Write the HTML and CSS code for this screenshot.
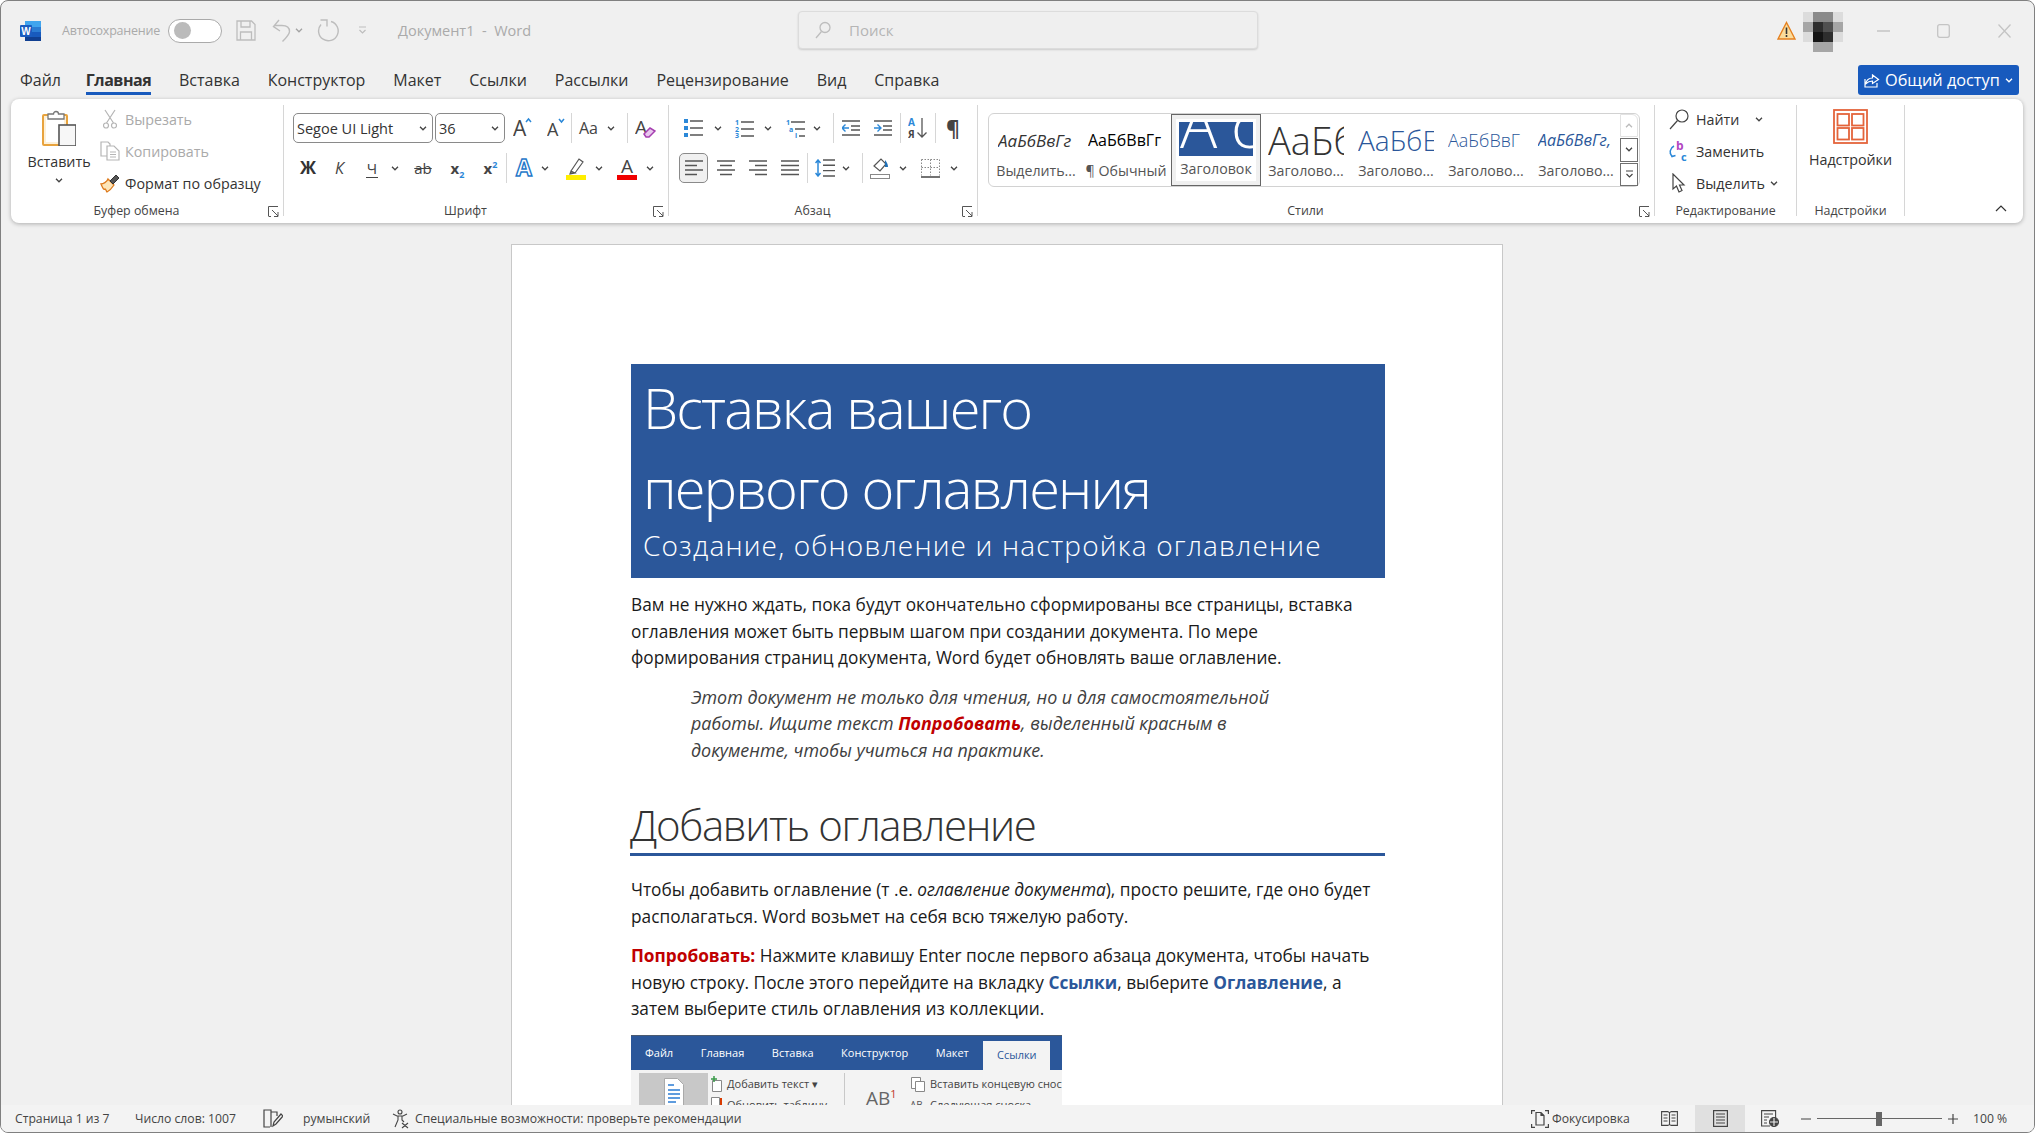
FILE: index.html

```html
<!DOCTYPE html>
<html lang="ru">
<head>
    <meta charset="UTF-8">
    <title>Документ1 - Word</title>
    <link rel="stylesheet" href="styles.css">
</head>
<body>
    <svg class="sprite" width="0" height="0">
        <symbol id="chev" viewBox="0 0 8 5"><path d="M1 .8l3 3 3-3" fill="none" stroke="#444" stroke-width="1.3"/></symbol>
        <symbol id="launch" viewBox="0 0 11 11"><path d="M.5 10V.5H10M4 4l6 6M10 6v4.500H6M.5 10.500H3" fill="none" stroke="#555"/></symbol>
    </svg>
    <div class="window">
        <header class="titlebar">
            <svg class="word-logo" width="21" height="20" viewBox="0 0 21 20">
                <rect x="5" width="16" height="6" fill="#41a5ee"/>
                <rect x="5" y="6" width="16" height="5" fill="#2b7cd3"/>
                <rect x="5" y="11" width="16" height="5" fill="#185abd"/>
                <rect x="5" y="16" width="16" height="4" fill="#103f91"/>
                <rect y="4" width="12" height="12" rx="1" fill="#1a5cc0"/>
                <text x="6" y="13.500" text-anchor="middle" font-size="10" font-weight="700" fill="#fff" font-family="Liberation Sans">W</text>
            </svg>
            <span class="autosave">Автосохранение</span>
            <span class="toggle"><span class="knob"></span></span>
            <svg class="qat-save" width="20" height="21" viewBox="0 0 20 21" fill="none" stroke="#bdbdbd" stroke-width="1.300">
                <path d="M1 1h14.500L19 4.500V20H1zM5 1v6h9V1M4.500 20v-8h11v8"/>
            </svg>
            <svg class="qat-undo" width="19" height="24" viewBox="0 0 19 24" fill="none" stroke="#bdbdbd" stroke-width="1.400">
                <path d="M7 1L1.500 7.500 8 12M2 6.500h8c5 0 7.500 2.500 7.500 6 0 3-3 6-7 10"/>
            </svg>
            <svg class="chev m4" width="8" height="5"><use href="#chev" opacity=".45"/></svg>
            <svg class="qat-redo" width="22" height="24" viewBox="0 0 22 24" fill="none" stroke="#bdbdbd" stroke-width="1.400">
                <path d="M14 2.500a9.800 9.800 0 1 1-10 3M3.500 1H10v6.500"/>
            </svg>
            <svg class="qat-more" width="9" height="9" viewBox="0 0 9 9" fill="none" stroke="#bdbdbd" stroke-width="1.200">
                <path d="M1 1h7M1.500 4l3 3 3-3"/>
            </svg>
            <span class="doc-name">Документ1&nbsp; -&nbsp; Word</span>
            <div class="search">
                <svg width="16" height="18" viewBox="0 0 16 18" fill="none" stroke="#bdbdbd" stroke-width="1.300"><circle cx="10" cy="6.500" r="5"/><path d="M6.500 10.500L1 17"/></svg>
                <span>Поиск</span>
            </div>
            <svg class="warn" width="19" height="19" viewBox="0 0 19 19">
                <path d="M9.500 1.500L18 18H1z" fill="#fbdc9c" stroke="#e5801f" stroke-width="1.400"/>
                <path d="M9.500 6.500v6.500M9.500 14v2" stroke="#333" stroke-width="1.600"/>
            </svg>
            <div class="avatar">
                <i class="p1"></i><i class="p3"></i><i class="p3"></i><i class="p1"></i>
                <i class="p2"></i><i class="p5"></i><i class="p4"></i><i class="p2"></i>
                <i class="p1"></i><i class="p6"></i><i class="p5"></i><i class="p1"></i>
                <i class="p0"></i><i class="p2"></i><i class="p2"></i><i class="p0"></i>
            </div>
            <svg class="win-min" width="13" height="2"><path d="M0 1h13" stroke="#c4c4c4" stroke-width="1.400"/></svg>
            <svg class="win-max" width="13" height="14" viewBox="0 0 13 14"><rect x=".7" y=".7" width="11.600" height="12.600" rx="2" fill="none" stroke="#c4c4c4" stroke-width="1.300"/></svg>
            <svg class="win-close" width="13" height="14" viewBox="0 0 13 14"><path d="M.5.500l12 13M12.500.500l-12 13" stroke="#c4c4c4" stroke-width="1.300"/></svg>
        </header>

        <nav class="tabs">
            <span class="tab">Файл</span>
            <span class="tab tab-active">Главная</span>
            <span class="tab">Вставка</span>
            <span class="tab">Конструктор</span>
            <span class="tab">Макет</span>
            <span class="tab">Ссылки</span>
            <span class="tab">Рассылки</span>
            <span class="tab">Рецензирование</span>
            <span class="tab">Вид</span>
            <span class="tab">Справка</span>
            <button class="share">
                <svg width="16" height="16" viewBox="0 0 16 16" fill="none" stroke="#fff" stroke-width="1.200"><path d="M1 7v8h12v-4M1.500 12c1-4 4-6 7-6V3l6 4.500-6 4V9c-3 0-5 1-7 3z"/></svg>
                <span>Общий доступ</span>
                <svg class="chev" width="8" height="5" viewBox="0 0 8 5"><path d="M1 .8l3 3 3-3" fill="none" stroke="#fff" stroke-width="1.300"/></svg>
            </button>
        </nav>

        <section class="ribbon">
            <div class="group g-clip">
                <div class="group-body clip-body">
                    <div class="paste">
                        <svg width="34" height="36" viewBox="0 0 34 36">
                            <rect x="1" y="5" width="24" height="30" rx="1" fill="#fdf0d8" stroke="#e8a33d" stroke-width="2"/>
                            <rect x="4" y="8" width="18" height="24" fill="#fff"/>
                            <path d="M6 9V4h5.500a2.500 2.500 0 0 1 5 0H22v5z" fill="#fff" stroke="#777" stroke-width="1.300"/>
                            <rect x="17" y="15" width="17" height="21" fill="#f7f7f7" stroke="#555" stroke-width="1.600"/>
                        </svg>
                        <span class="paste-label">Вставить</span>
                        <svg class="chev" width="8" height="5"><use href="#chev"/></svg>
                    </div>
                    <div class="stack">
                        <div class="stack-row dim">
                            <span class="stack-icon"><svg width="14" height="20" viewBox="0 0 14 20" fill="none" stroke="#b5b5b5" stroke-width="1.200"><path d="M2 1l8.500 13M12 1L3.500 14"/><circle cx="3" cy="16.500" r="2.500"/><circle cx="11" cy="16.500" r="2.500"/></svg></span>
                            <span>Вырезать</span>
                        </div>
                        <div class="stack-row dim">
                            <span class="stack-icon"><svg width="20" height="20" viewBox="0 0 20 20" fill="none" stroke="#b5b5b5" stroke-width="1.200"><path d="M7 15H1V1h7l2 2v2"/><path d="M7 5h7l5 5v9H7z" fill="#fff"/><path d="M10 11h6M10 13.500h6M10 16h6"/></svg></span>
                            <span>Копировать</span>
                        </div>
                        <div class="stack-row">
                            <span class="stack-icon"><svg width="20" height="19" viewBox="0 0 20 19"><path d="M8 5l6 6c-2 3-5 6-7 7-1-1-1-3-2-3-1 1-2 0-4-5 2 0 6-2 7-5z" fill="#fde5b8" stroke="#dd7a1c" stroke-width="1.300"/><path d="M10 7l6-6 3 3-6 6z" fill="#555" stroke="#333"/></svg></span>
                            <span>Формат по образцу</span>
                        </div>
                    </div>
                </div>
                <div class="group-label">Буфер обмена<svg class="launcher" width="11" height="11"><use href="#launch"/></svg></div>
            </div>

            <div class="group g-font">
                <div class="group-body rows">
                    <div class="row">
                        <div class="select sel-font">Segoe UI Light<svg class="chev" width="8" height="5"><use href="#chev"/></svg></div>
                        <div class="select sel-size m2">36<svg class="chev" width="8" height="5"><use href="#chev"/></svg></div>
                        <svg class="m8" width="20" height="22" viewBox="0 0 20 22"><text x="0" y="19" font-size="21" fill="#444" class="ico-text">A</text><path d="M13 5l2.500-3L18 5" fill="none" stroke="#2b88d8" stroke-width="1.500"/></svg>
                        <svg class="m14" width="18" height="22" viewBox="0 0 18 22"><text x="0" y="19" font-size="18" fill="#444" class="ico-text">A</text><path d="M12 2l2.500 3L17 2" fill="none" stroke="#2b88d8" stroke-width="1.500"/></svg>
                        <span class="sep m6"></span>
                        <span class="change-case m7">Aa</span>
                        <svg class="chev m6" width="8" height="5"><use href="#chev"/></svg>
                        <span class="sep m12"></span>
                        <svg class="m7" width="21" height="24" viewBox="0 0 21 24"><text x="0" y="18" font-size="19" fill="#444" class="ico-text">A</text><path d="M9 18l6-6 5 3-6 6h-3z" fill="#e8c8ee" stroke="#a53fb0" stroke-width="1.500"/></svg>
                    </div>
                    <div class="row">
                        <b class="fmt fmt-b m6">Ж</b>
                        <i class="fmt fmt-i m18">К</i>
                        <span class="fmt fmt-u m23">Ч</span>
                        <svg class="chev m13" width="8" height="5"><use href="#chev"/></svg>
                        <span class="fmt fmt-s m14">ab</span>
                        <span class="fmt fmt-x m17"><b>x</b><sub>2</sub></span>
                        <span class="fmt fmt-x m18"><b>x</b><sup>2</sup></span>
                        <span class="sep m8"></span>
                        <svg class="m7" width="20" height="22" viewBox="0 0 20 22"><text x="10" y="19" text-anchor="middle" font-size="23" font-weight="700" fill="#fff" stroke="#1f78c9" stroke-width="1.400" class="ico-text">A</text></svg>
                        <svg class="chev m7" width="8" height="5"><use href="#chev"/></svg>
                        <svg class="m17" width="20" height="24" viewBox="0 0 20 24"><path d="M5 15L13 3l4 3-8 11H5zM4 18l1-3 4 2z" fill="#fff" stroke="#555" stroke-width="1.200"/><rect y="19" width="20" height="5" fill="#ffee00"/></svg>
                        <svg class="chev m9" width="8" height="5"><use href="#chev"/></svg>
                        <svg class="m14" width="20" height="24" viewBox="0 0 20 24"><text x="10" y="17" text-anchor="middle" font-size="19" fill="#444" class="ico-text">A</text><rect y="19" width="20" height="5" fill="#f00000"/></svg>
                        <svg class="chev m9" width="8" height="5"><use href="#chev"/></svg>
                    </div>
                </div>
                <div class="group-label">Шрифт<svg class="launcher" width="11" height="11"><use href="#launch"/></svg></div>
            </div>

            <div class="group g-para">
                <div class="group-body rows">
                    <div class="row">
                        <svg class="m5" width="19" height="18" viewBox="0 0 19 18"><path d="M0 0h4v4H0zM0 7h4v4H0zM0 14h4v4H0z" fill="#2b88d8"/><path d="M6 2h13M6 9h13M6 16h13" stroke="#555" stroke-width="1.400"/></svg>
                        <svg class="chev m11" width="8" height="5"><use href="#chev"/></svg>
                        <svg class="m13" width="19" height="19" viewBox="0 0 19 19"><g font-size="7" font-weight="700" fill="#2b88d8" class="ico-text"><text y="6">1</text><text y="12.500">2</text><text y="19">3</text></g><path d="M6 3h13M6 10h13M6 17h13" stroke="#555" stroke-width="1.400"/></svg>
                        <svg class="chev m10" width="8" height="5"><use href="#chev"/></svg>
                        <svg class="m14" width="19" height="19" viewBox="0 0 19 19"><g font-size="7" font-weight="700" fill="#2b88d8" class="ico-text"><text y="6">1</text><text x="3" y="12.500">a</text><text x="9" y="19">i</text></g><path d="M5 3h14M9 10h10M13 17h6" stroke="#555" stroke-width="1.400"/></svg>
                        <svg class="chev m8" width="8" height="5"><use href="#chev"/></svg>
                        <span class="sep m12"></span>
                        <svg class="m8" width="18" height="16" viewBox="0 0 18 16"><path d="M0 1h18M9 6h9M9 10h9M0 15h18" stroke="#555" stroke-width="1.400"/><path d="M0 8h7M3.500 4.500L0 8l3.500 3.500" fill="none" stroke="#2b88d8" stroke-width="1.400"/></svg>
                        <svg class="m14" width="18" height="16" viewBox="0 0 18 16"><path d="M0 1h18M9 6h9M9 10h9M0 15h18" stroke="#555" stroke-width="1.400"/><path d="M0 8h7M3.500 4.500L7 8l-3.500 3.500" fill="none" stroke="#2b88d8" stroke-width="1.400"/></svg>
                        <span class="sep m8"></span>
                        <svg class="m7" width="19" height="22" viewBox="0 0 19 22"><text x="0" y="9" font-size="10" font-weight="700" fill="#2b88d8" class="ico-text">A</text><text x="0" y="21" font-size="10" font-weight="700" fill="#444" class="ico-text">Я</text><path d="M14 1v19M9.500 15.500L14 20l4.500-4.500" fill="none" stroke="#555" stroke-width="1.300"/></svg>
                        <span class="sep m8"></span>
                        <span class="pilcrow m10">¶</span>
                    </div>
                    <div class="row">
                        <span class="align-on"><svg width="18" height="16" viewBox="0 0 18 16"><path d="M0 1h18M0 5.500h12M0 10h18M0 14.500h12" stroke="#555" stroke-width="1.400"/></svg></span>
                        <svg class="m9" width="18" height="16" viewBox="0 0 18 16"><path d="M0 1h18M3 5.500h12M0 10h18M3 14.500h12" stroke="#555" stroke-width="1.400"/></svg>
                        <svg class="m14" width="18" height="16" viewBox="0 0 18 16"><path d="M0 1h18M6 5.500h12M0 10h18M6 14.500h12" stroke="#555" stroke-width="1.400"/></svg>
                        <svg class="m14" width="18" height="16" viewBox="0 0 18 16"><path d="M0 1h18M0 5.500h18M0 10h18M0 14.500h18" stroke="#555" stroke-width="1.400"/></svg>
                        <span class="sep m8"></span>
                        <svg class="m7" width="20" height="18" viewBox="0 0 20 18"><path d="M8 1h12M8 6.300h12M8 11.600h12M8 17h12" stroke="#555" stroke-width="1.400"/><path d="M3 1v16M.5 4L3 1l2.500 3M.5 14L3 17l2.500-3" fill="none" stroke="#2b88d8" stroke-width="1.500"/></svg>
                        <svg class="chev m7" width="8" height="5"><use href="#chev"/></svg>
                        <span class="sep m12"></span>
                        <svg class="m7" width="20" height="22" viewBox="0 0 20 22"><path d="M4 9l7-7 5 5-6 7z" fill="#fff" stroke="#555" stroke-width="1.200"/><path d="M15 3c2 2 3 5 3 7h-3z" fill="#1f6fb5"/><rect x=".5" y="17.500" width="19" height="4" fill="#fff" stroke="#888"/></svg>
                        <svg class="chev m9" width="8" height="5"><use href="#chev"/></svg>
                        <svg class="m14" width="19" height="19" viewBox="0 0 19 19"><path d="M.5.500h18v16M.5.500v16M9.500.500v16M.5 8.500h18" fill="none" stroke="#888" stroke-dasharray="1.500 1.500"/><path d="M0 18h19" stroke="#444" stroke-width="1.600"/></svg>
                        <svg class="chev m10" width="8" height="5"><use href="#chev"/></svg>
                    </div>
                </div>
                <div class="group-label">Абзац<svg class="launcher" width="11" height="11"><use href="#launch"/></svg></div>
            </div>

            <div class="group g-styles">
                <div class="group-body">
                    <div class="gallery">
                        <div class="style-item">
                            <div class="preview pv-em">АаБбВвГг</div>
                            <div class="style-name">Выделить...</div>
                        </div>
                        <div class="style-item">
                            <div class="preview pv-normal">АаБбВвГг</div>
                            <div class="style-name">¶ Обычный</div>
                        </div>
                        <div class="style-item style-on">
                            <svg class="pv-title" width="74" height="34" viewBox="0 0 74 34"><rect width="74" height="34" fill="#2b579a"/><text x="1 52" y="26" font-size="62" font-weight="300" fill="#fff" class="ico-text">Ас</text></svg>
                            <div class="style-name">Заголовок</div>
                        </div>
                        <div class="style-item">
                            <div class="preview pv-h1">АаБб</div>
                            <div class="style-name">Заголово...</div>
                        </div>
                        <div class="style-item">
                            <div class="preview pv-h2">АаБбЕ</div>
                            <div class="style-name">Заголово...</div>
                        </div>
                        <div class="style-item">
                            <div class="preview pv-h3">АаБбВвГ</div>
                            <div class="style-name">Заголово...</div>
                        </div>
                        <div class="style-item">
                            <div class="preview pv-h4">АаБбВвГг,</div>
                            <div class="style-name">Заголово...</div>
                        </div>
                        <div class="gallery-scroll">
                            <span class="scroll-btn scroll-off"><svg width="8" height="5" viewBox="0 0 8 5"><path d="M1 4.200l3-3 3 3" fill="none" stroke="#bbb" stroke-width="1.300"/></svg></span>
                            <span class="scroll-btn"><svg class="chev" width="8" height="5"><use href="#chev"/></svg></span>
                            <span class="scroll-btn"><svg width="9" height="9" viewBox="0 0 9 9" fill="none" stroke="#444" stroke-width="1.200"><path d="M1 1h7M1.500 4l3 3 3-3"/></svg></span>
                        </div>
                    </div>
                </div>
                <div class="group-label">Стили<svg class="launcher" width="11" height="11"><use href="#launch"/></svg></div>
            </div>

            <div class="group g-edit">
                <div class="group-body stack">
                    <div class="stack-row">
                        <span class="edit-icon"><svg width="20" height="21" viewBox="0 0 20 21" fill="none" stroke="#444" stroke-width="1.200"><circle cx="13" cy="7" r="6"/><path d="M8.500 11.500L1 20"/></svg></span>
                        <span>Найти</span>
                        <svg class="chev m16" width="8" height="5"><use href="#chev"/></svg>
                    </div>
                    <div class="stack-row">
                        <span class="edit-icon"><svg width="20" height="21" viewBox="0 0 20 21"><text x="7" y="9" font-size="12" font-weight="700" fill="#b146c2" class="ico-text">b</text><text x="12" y="20" font-size="11" font-weight="700" fill="#2b88d8" class="ico-text">c</text><path d="M5 5C1 7 0 12 3 15M1 12l2 3.500 3.500-1" fill="none" stroke="#2b88d8" stroke-width="1.500"/></svg></span>
                        <span>Заменить</span>
                    </div>
                    <div class="stack-row">
                        <span class="edit-icon"><svg width="20" height="21" viewBox="0 0 20 21"><path d="M4 1v15l3.500-3 2.500 6 3-1.500-2.500-5.500H15z" fill="#fff" stroke="#444" stroke-width="1.200"/></svg></span>
                        <span>Выделить</span>
                        <svg class="chev m5" width="8" height="5"><use href="#chev"/></svg>
                    </div>
                </div>
                <div class="group-label">Редактирование</div>
            </div>

            <div class="group g-addin">
                <div class="group-body addin-body">
                    <svg width="35" height="35" viewBox="0 0 35 35" fill="none" stroke="#e4643b" stroke-width="1.800"><rect x="1" y="1" width="33" height="33"/><rect x="4.500" y="5" width="11.500" height="11.500"/><rect x="19" y="5" width="11.500" height="11.500"/><rect x="4.500" y="19" width="11.500" height="11.500"/><rect x="19" y="19" width="11.500" height="11.500"/></svg>
                    <span class="addin-label">Надстройки</span>
                </div>
                <div class="group-label">Надстройки</div>
            </div>

            <div class="collapse">
                <svg width="12" height="7" viewBox="0 0 12 7"><path d="M1 6l5-5 5 5" fill="none" stroke="#333" stroke-width="1.200"/></svg>
            </div>
        </section>

        <main class="doc-area">
            <article class="page">
                <div class="banner">
                    <div class="doc-title">Вставка вашего<br>первого оглавления</div>
                    <div class="doc-subtitle">Создание, обновление и настройка оглавление</div>
                </div>
                <p class="para para-first">Вам не нужно ждать, пока будут окончательно сформированы все страницы, вставка<br>оглавления может быть первым шагом при создании документа. По мере<br>формирования страниц документа, Word будет обновлять ваше оглавление.</p>
                <p class="para quote">Этот документ не только для чтения, но и для самостоятельной<br>работы. Ищите текст <b class="try">Попробовать</b>, выделенный красным в<br>документе, чтобы учиться на практике.</p>
                <h2 class="doc-h2">Добавить оглавление</h2>
                <p class="para">Чтобы добавить оглавление (т .е. <em>оглавление документа</em>), просто решите, где оно будет<br>располагаться. Word возьмет на себя всю тяжелую работу.</p>
                <p class="para para-next"><b class="try">Попробовать:</b> Нажмите клавишу Enter после первого абзаца документа, чтобы начать<br>новую строку. После этого перейдите на вкладку <b class="link">Ссылки</b>, выберите <b class="link">Оглавление</b>, а<br>затем выберите стиль оглавления из коллекции.</p>
                <div class="shot">
                    <div class="shot-tabs">
                        <span>Файл</span><span>Главная</span><span>Вставка</span><span>Конструктор</span><span>Макет</span><span class="shot-active">Ссылки</span>
                    </div>
                    <div class="shot-ribbon">
                        <div class="shot-big">
                            <svg width="20" height="28" viewBox="0 0 20 28"><path d="M.5.500h13l6 6v21H.5z" fill="#fff" stroke="#aaa"/><path d="M4 7h6M4 12h12M4 16h12M4 20h12M4 24h8" stroke="#2b7cd3" stroke-width="1.500"/></svg>
                        </div>
                        <div class="shot-col shot-col-a">
                            <span><svg width="12" height="16" viewBox="0 0 12 16"><path d="M1.500 4.500h9v11h-9z" fill="#fff" stroke="#888"/><path d="M3 0v6M0 3h6" stroke="#3a9b4a" stroke-width="1.500"/></svg>Добавить текст ▾</span>
                            <span><svg width="12" height="16" viewBox="0 0 12 16"><path d="M.5.500h8v15h-8z" fill="#fff" stroke="#888"/><path d="M10 1v10" stroke="#d83b01" stroke-width="2"/></svg>Обновить таблицу</span>
                        </div>
                        <span class="shot-sep"></span>
                        <div class="shot-ab">AB<sup>1</sup></div>
                        <div class="shot-col">
                            <span><svg width="16" height="16" viewBox="0 0 16 16"><path d="M1.500 1.500h9v11h-9z" fill="#fff" stroke="#888"/><path d="M5.500 5.500h9v10h-9z" fill="#fff" stroke="#888"/></svg>Вставить концевую сноску</span>
                            <span><svg width="16" height="16" viewBox="0 0 16 16"><text y="12" font-size="10" fill="#555" class="ico-text">AB</text></svg>Следующая сноска</span>
                        </div>
                    </div>
                </div>
            </article>
        </main>

        <footer class="statusbar">
            <span class="st-page">Страница 1 из 7</span>
            <span class="st-words">Число слов: 1007</span>
            <svg class="st-proof" width="20" height="19" viewBox="0 0 20 19" fill="none" stroke="#444" stroke-width="1.200"><path d="M7 18H1V1h7v2h6v4M8 3v15"/><path d="M10 17l1-4 7-8 2 2-7 8z"/></svg>
            <span class="st-lang">румынский</span>
            <svg class="st-acc" width="17" height="20" viewBox="0 0 17 20" fill="none" stroke="#444" stroke-width="1.100"><circle cx="8" cy="3" r="2"/><path d="M1 5l4 2h6l4-2M6 7v4l-3 7M10 7v4l2 2M10 14l6 5M16 14l-6 5"/></svg>
            <span class="st-acc-text">Специальные возможности: проверьте рекомендации</span>
            <span class="st-focus">
                <svg width="18" height="18" viewBox="0 0 18 18" fill="none" stroke="#444" stroke-width="1.200"><path d="M0.600 4V.600H4M14 .600h3.400V4M.600 14v3.400H4M14 17.400h3.400V14"/><path d="M5 2.500h5l3 3V15H5zM10 2.500v3h3"/></svg>
                Фокусировка
            </span>
            <svg class="st-read" width="17" height="15" viewBox="0 0 17 15" fill="none" stroke="#444" stroke-width="1.100"><path d="M.6.600h6.200l1.700 1 1.700-1h6.200v13.800h-6.200l-1.700-.8-1.700.8H.6zM8.500 1.600v12M2.500 4h4M2.500 7h4M2.500 10h4M10.500 4h4M10.500 7h4M10.500 10h4"/></svg>
            <span class="st-view"><svg width="15" height="17" viewBox="0 0 15 17" fill="none" stroke="#444" stroke-width="1.200"><rect x=".6" y=".6" width="13.800" height="15.800"/><path d="M3 4h9M3 7h9M3 10h9M3 13h9"/></svg></span>
            <svg class="st-web" width="18" height="17" viewBox="0 0 18 17" fill="none" stroke="#444" stroke-width="1.100"><path d="M9 16H.6V.6h14V8M3 4h9M3 7h5M3 10h3M3 13h3"/><circle cx="13" cy="12" r="4.500" fill="#444"/><path d="M9 12h8M13 8v8" stroke="#eee"/></svg>
            <svg class="st-minus" width="10" height="2"><path d="M0 1h10" stroke="#444" stroke-width="1.200"/></svg>
            <span class="zoom-track"><span class="zoom-thumb"></span></span>
            <svg class="st-plus" width="10" height="10"><path d="M0 5h10M5 0v10" stroke="#444" stroke-width="1.200"/></svg>
            <span class="st-zoom">100 %</span>
        </footer>
    </div>
</body>
</html>
```

FILE: styles.css

```css
* {
    box-sizing: border-box;
}
html, body {
    height: 100%;
}
body {
    margin: 0;
    background-color: #ffffff;
    font-family: "Open Sans", "Noto Sans", sans-serif;
    color: #333;
    overflow: hidden;
}
svg {
    flex: none;
    display: block;
}
.sprite {
    position: absolute;
}
.ico-text {
    font-family: "Open Sans", sans-serif;
}

/* spacing helpers for the toolbars */
.m2 { margin-left: 2px; }
.m4 { margin-left: 4px; }
.m5 { margin-left: 5px; }
.m6 { margin-left: 6px; }
.m7 { margin-left: 7px; }
.m8 { margin-left: 8px; }
.m9 { margin-left: 9px; }
.m10 { margin-left: 10px; }
.m11 { margin-left: 11px; }
.m12 { margin-left: 12px; }
.m13 { margin-left: 13px; }
.m14 { margin-left: 14px; }
.m16 { margin-left: 16px; }
.m17 { margin-left: 17px; }
.m18 { margin-left: 18px; }
.m23 { margin-left: 23px; }

.window {
    height: 100vh;
    display: flex;
    flex-direction: column;
    background-color: #f0f0f0;
    border: 1px solid #808080;
    border-radius: 8px;
    overflow: hidden;
}

/* title bar */
.titlebar {
    height: 59px;
    flex: none;
    display: flex;
    align-items: center;
    padding-left: 19px;
}
.autosave {
    margin-left: 21px;
    font-size: 12.500px;
    letter-spacing: -0.2px;
    color: #aaa;
    width: 106px;
    white-space: nowrap;
}
.toggle {
    width: 54px;
    height: 24px;
    display: flex;
    align-items: center;
    padding-left: 5px;
    background-color: #fff;
    border: 1px solid #aaa;
    border-radius: 12px;
}
.knob {
    width: 17px;
    height: 17px;
    border-radius: 50%;
    background-color: #bbb;
}
.qat-save { margin-left: 14px; }
.qat-undo { margin-left: 16px; }
.qat-redo { margin-left: 14px; }
.qat-more { margin-left: 19px; }
.doc-name {
    margin-left: 31px;
    width: 400px;
    font-size: 14.500px;
    color: #aaa;
}
.search {
    width: 460px;
    height: 38px;
    margin-top: -2px;
    display: flex;
    align-items: center;
    gap: 18px;
    padding-left: 16px;
    background-color: #efefef;
    border: 1px solid #dcdcdc;
    border-radius: 4px;
    box-shadow: 0 1px 2px rgba(0, 0, 0, 0.15);
    font-size: 15px;
    color: #b5b5b5;
}
.warn { margin-left: 519px; }
.avatar {
    margin-left: 7px;
    margin-top: 2px;
    width: 40px;
    height: 40px;
    display: grid;
    grid-template-columns: repeat(4, 10px);
    grid-auto-rows: 10px;
}
.p0 { background-color: #f0f0f0; }
.p1 { background-color: #dcdcdc; }
.p2 { background-color: #a6a6a6; }
.p3 { background-color: #8a8a8a; }
.p4 { background-color: #505050; }
.p5 { background-color: #2e2e2e; }
.p6 { background-color: #141414; }
.win-min { margin-left: 34px; }
.win-max { margin-left: 47px; }
.win-close { margin-left: 48px; }

/* tabs */
.tabs {
    height: 39px;
    flex: none;
    display: flex;
    align-items: flex-start;
    gap: 27.900px;
    padding: 8px 15px 0 19px;
    font-size: 16px;
    color: #333;
}
.tab {
    height: 27px;
    line-height: 24px;
    border-bottom: 3px solid transparent;
}
.tab-active {
    margin-left: -3px;
    font-weight: 700;
    letter-spacing: -0.5px;
    border-bottom-color: #185abd;
}
.share {
    margin-left: auto;
    margin-top: -3px;
    width: 161px;
    height: 30px;
    display: flex;
    align-items: center;
    gap: 5px;
    padding: 0 0 0 6px;
    border: none;
    border-radius: 3px;
    background-color: #185abd;
    color: #fff;
    font-family: inherit;
    font-size: 16.300px;
    white-space: nowrap;
}

/* ribbon */
.ribbon {
    margin: 0 11px 0 10px;
    height: 124px;
    flex: none;
    display: flex;
    padding: 6px 0 7px;
    background-color: #fff;
    border-radius: 8px;
    box-shadow: 0 1px 4px rgba(0, 0, 0, 0.28);
    font-size: 14.300px;
    color: #333;
}
.group {
    display: flex;
    flex-direction: column;
    flex: none;
    border-right: 1px solid #d6d6d6;
}
.group-body {
    flex: 1;
    min-height: 0;
}
.group-label {
    position: relative;
    height: 22px;
    line-height: 33px;
    text-align: center;
    font-size: 12.400px;
    color: #444;
    white-space: nowrap;
}
.g-clip .group-label,
.g-font .group-label,
.g-para .group-label,
.g-styles .group-label {
    padding-right: 21px;
}
.launcher {
    position: absolute;
    right: 4px;
    top: 12px;
}
.g-clip { width: 273px; }
.g-font { width: 385px; }
.g-para { width: 309px; }
.g-styles { width: 677px; }
.g-edit { width: 142px; }
.g-addin { width: 108px; }

.clip-body {
    display: flex;
    padding-left: 17px;
}
.paste {
    width: 62px;
    display: flex;
    flex-direction: column;
    align-items: center;
    padding-top: 5px;
}
.paste-label {
    margin-top: 6px;
    line-height: 20px;
}
.paste .chev {
    margin-top: 6px;
}
.clip-body .stack {
    margin-left: 10px;
}
.stack {
    display: flex;
    flex-direction: column;
    gap: 4px;
}
.stack-row {
    height: 28px;
    flex: none;
    display: flex;
    align-items: center;
    white-space: nowrap;
}
.dim {
    color: #aaa;
}
.stack-icon {
    width: 25px;
    display: flex;
    justify-content: center;
    padding-right: 5px;
}
.rows {
    display: flex;
    flex-direction: column;
    gap: 10px;
    padding-top: 8px;
}
.row {
    height: 30px;
    display: flex;
    align-items: center;
}
.g-font .row {
    padding-left: 9px;
}
.g-para .row {
    padding-left: 10px;
}
.sep {
    width: 1px;
    height: 30px;
    flex: none;
    background-color: #d6d6d6;
}
.select {
    height: 30px;
    display: flex;
    align-items: center;
    justify-content: space-between;
    padding: 0 5px 0 3px;
    border: 1px solid #8a8a8a;
    border-radius: 5px;
    font-size: 14.500px;
    white-space: nowrap;
}
.sel-font { width: 140px; }
.sel-size { width: 70px; }
.change-case {
    width: 22px;
    font-size: 16px;
    color: #444;
}
.fmt {
    color: #444;
    line-height: 20px;
    text-align: center;
}
.fmt-b { width: 18px; font-size: 17px; color: #333; }
.fmt-i { width: 8px; font-size: 16px; }
.fmt-u { width: 12px; font-size: 15px; border-bottom: 1.500px solid #444; line-height: 18px; }
.fmt-s { width: 20px; font-size: 15px; text-decoration: line-through; }
.fmt-x { width: 15px; font-size: 15px; white-space: nowrap; }
.fmt-x sub, .fmt-x sup {
    font-size: 9px;
    font-weight: 700;
    color: #2b88d8;
    line-height: 0;
}
.pilcrow {
    width: 14px;
    font-size: 21px;
    font-weight: 700;
    line-height: 24px;
    color: #444;
}
.align-on {
    width: 29px;
    height: 30px;
    flex: none;
    display: flex;
    align-items: center;
    justify-content: center;
    background-color: #f0f0f0;
    border: 1px solid #8a8a8a;
    border-radius: 5px;
}

/* styles gallery */
.g-styles .group-body {
    padding: 8px 0 0 10px;
}
.gallery {
    width: 652px;
    height: 74px;
    display: flex;
    padding-left: 2px;
    border: 1px solid #d2d2d2;
    border-radius: 6px;
}
.style-item {
    width: 90px;
    padding-top: 5px;
    flex: none;
    display: flex;
    flex-direction: column;
    align-items: center;
    overflow: hidden;
}
.style-on {
    padding-top: 0;
    background-color: #fff;
    border: 1.500px solid #666;
    box-shadow: inset 0 0 0 4px #f0f0f0;
}
.preview {
    width: 76px;
    height: 42px;
    flex: none;
    display: flex;
    align-items: center;
    overflow: hidden;
    white-space: nowrap;
}
.style-name {
    font-size: 14.200px;
    line-height: 20px;
    color: #555;
    white-space: nowrap;
}
.pv-em { font-size: 17px; font-style: italic; color: #333; }
.pv-normal { font-size: 16px; color: #000; }
.pv-title {
    margin-top: 7px;
    margin-bottom: 3px;
}
.pv-h1 { font-size: 38px; font-weight: 300; color: #333; }
.pv-h2 { font-size: 28px; font-weight: 300; color: #2b579a; }
.pv-h3 { font-size: 18px; font-weight: 300; color: #2b579a; }
.pv-h4 { font-size: 16px; font-style: italic; color: #2b579a; }
.gallery-scroll {
    width: 18px;
    margin-left: -1px;
    display: flex;
    flex-direction: column;
    gap: 1px;
}
.scroll-btn {
    flex: 1;
    display: flex;
    align-items: center;
    justify-content: center;
    border: 1px solid #6f6f6f;
    background-color: #fff;
}
.scroll-off {
    border-color: #e2e2e2;
    border-radius: 0 6px 0 0;
}

/* editing and add-ins */
.g-edit .stack {
    padding-left: 14px;
}
.edit-icon {
    width: 27px;
}
.addin-body {
    display: flex;
    flex-direction: column;
    align-items: center;
    padding-top: 4px;
}
.addin-label {
    margin-top: 6px;
    line-height: 20px;
}
.collapse {
    flex: 1;
    display: flex;
    justify-content: flex-end;
    align-items: flex-end;
    padding: 0 16px 4px 0;
}

/* document */
.doc-area {
    flex: 1;
    min-height: 0;
    overflow: hidden;
    padding: 21px 0 0 510px;
}
.page {
    width: 992px;
    height: 1000px;
    padding: 119px 117px 0 119px;
    background-color: #fff;
    border: 1px solid #c8c8c8;
    font-size: 17.270px;
    color: #1a1a1a;
}
.banner {
    height: 214px;
    padding-left: 12px;
    background-color: #2b579a;
    color: #fff;
    font-weight: 300;
}
.doc-title {
    font-size: 56px;
    line-height: 80px;
    padding-top: 3px;
    letter-spacing: -1.850px;
    white-space: nowrap;
}
.doc-subtitle {
    font-size: 28px;
    line-height: 36px;
    letter-spacing: 1.160px;
    white-space: nowrap;
}
.para {
    margin: 0;
    line-height: 26.500px;
    white-space: nowrap;
}
.para-first {
    margin-top: 14px;
}
.quote {
    margin: 12px 0 0 60px;
    font-size: 17.900px;
    font-style: italic;
    color: #404040;
}
.doc-h2 {
    margin: 36px 0 21px -1px;
    height: 57px;
    font-size: 42px;
    line-height: 52px;
    font-weight: 300;
    letter-spacing: -1.400px;
    color: #333;
    border-bottom: 3px solid #2b579a;
}
.para-next {
    margin-top: 13px;
}
.try {
    color: #c00000;
}
.link {
    color: #2b579a;
}
.shot {
    width: 431px;
    height: 120px;
    margin-top: 12px;
    background-color: #f3f3f3;
    border-top: 1px solid #4a5a70;
    overflow: hidden;
}
.shot-tabs {
    height: 34px;
    display: flex;
    align-items: center;
    gap: 27.500px;
    padding-left: 14px;
    background-color: #2b579a;
    color: #fff;
    font-size: 11px;
}
.shot-active {
    margin-left: -13px;
    width: 67px;
    height: 29px;
    margin-top: 5px;
    line-height: 27px;
    text-align: center;
    background-color: #f3f3f3;
    color: #2b579a;
}
.shot-ribbon {
    display: flex;
    padding: 3px 0 0 8px;
    font-size: 11px;
    color: #444;
    white-space: nowrap;
}
.shot-big {
    width: 69px;
    height: 60px;
    flex: none;
    display: flex;
    justify-content: center;
    padding-top: 5px;
    background-color: #c8c8c8;
}
.shot-col {
    flex: none;
    display: flex;
    flex-direction: column;
    gap: 3px;
    margin-left: 3px;
    padding-top: 2px;
}
.shot-col-a {
    width: 133px;
}
.shot-col span {
    display: flex;
    align-items: center;
    gap: 4px;
    height: 18px;
}
.shot-sep {
    width: 1px;
    height: 60px;
    flex: none;
    background-color: #c8c8c8;
}
.shot-ab {
    width: 62px;
    flex: none;
    margin-top: 12px;
    padding-left: 21px;
    font-size: 19px;
    color: #666;
}
.shot-ab sup {
    color: #c0392b;
    font-size: 11px;
}

/* status bar */
.statusbar {
    height: 27px;
    flex: none;
    display: flex;
    align-items: center;
    padding-left: 14px;
    background-color: #f3f3f3;
    font-size: 12.200px;
    color: #444;
    white-space: nowrap;
}
.st-page { width: 120px; }
.st-words { width: 128px; }
.st-lang { margin-left: 20px; width: 89px; }
.st-acc-text { margin-left: 6px; width: 1116px; }
.st-focus {
    display: flex;
    align-items: center;
    gap: 3px;
    width: 130px;
}
.st-view {
    width: 50px;
    height: 27px;
    margin-left: 17px;
    display: flex;
    align-items: center;
    justify-content: center;
    background-color: #e0e0e0;
}
.st-web { margin-left: 16px; }
.st-minus { margin-left: 22px; }
.zoom-track {
    width: 125px;
    height: 1px;
    margin-left: 6px;
    display: flex;
    align-items: center;
    padding-left: 59px;
    background-color: #666;
}
.zoom-thumb {
    width: 6px;
    height: 14px;
    background-color: #666;
}
.st-plus { margin-left: 6px; }
.st-zoom { margin-left: 15px; }
```
